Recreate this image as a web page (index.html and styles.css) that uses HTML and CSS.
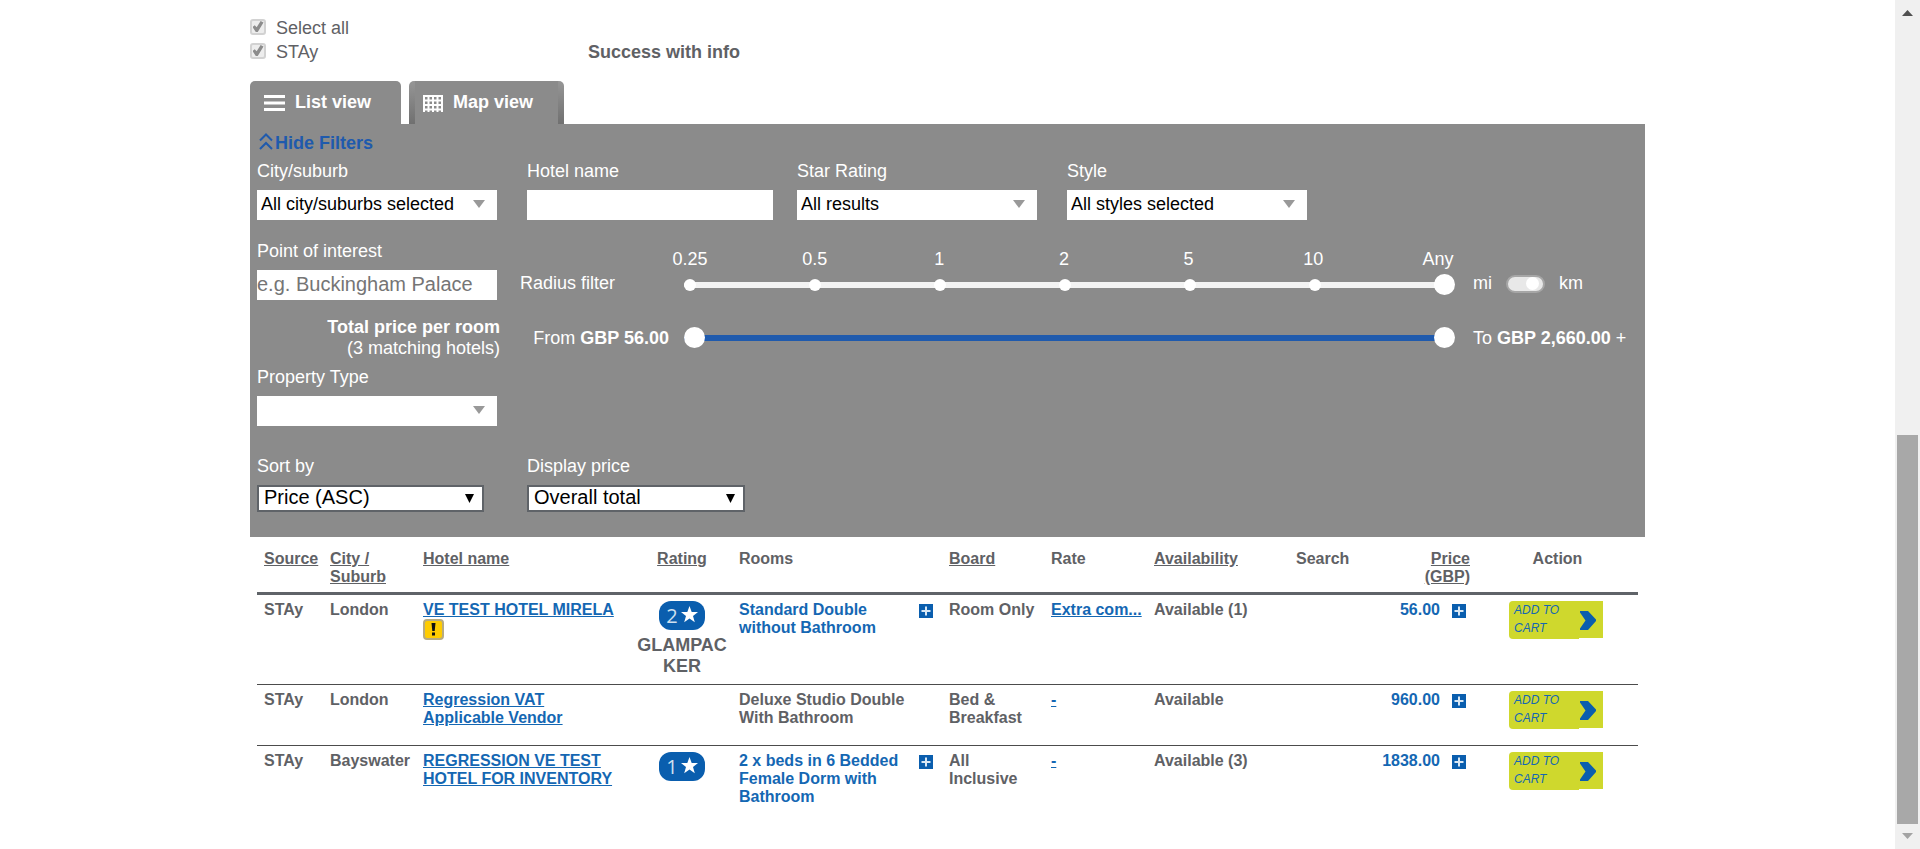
FILE: index.html
```html
<!DOCTYPE html>
<html lang="en">
<head>
<meta charset="utf-8">
<meta name="viewport" content="width=device-width, initial-scale=1">
<title>Hotel results</title>
<link rel="stylesheet" href="styles.css">
</head>
<body>
<svg class="defs" aria-hidden="true">
  <symbol id="plus" viewBox="0 0 14 14"><rect width="14" height="14" fill="#0a5eae"/><path d="M7 2.500v9M2.500 7h9" stroke="#d9e8f5" stroke-width="2"/></symbol>
  <symbol id="star" viewBox="0 0 17 17"><path fill="#fff" d="M8.500 0l2.200 5.900 6.300.2-5 3.900 1.800 6.200-5.300-3.600-5.300 3.600 1.800-6.200-5-3.900 6.300-.2z"/></symbol>
  <symbol id="next" viewBox="0 0 16 19"><path fill="#0a5eae" d="M0 0h8l8 8.500v1.500l-8 9H0v-1.500l5.500-8L0 1.500z"/></symbol>
</svg>
<div class="page">
  <main class="results">
    <section class="sources">
      <label class="source"><input class="check" type="checkbox" checked disabled>Select all</label>
      <div class="source-row">
        <label class="source"><input class="check" type="checkbox" checked disabled>STAy</label>
        <strong>Success with info</strong>
      </div>
    </section>

    <nav class="tabs">
      <button class="tab" type="button">
        <svg width="21" height="16" viewBox="0 0 21 16"><path d="M0 1.500h21M0 8h21M0 14.500h21" stroke="#fff" stroke-width="3"/></svg>
        List view
      </button>
      <button class="tab tab-map" type="button">
        <svg width="20" height="17" viewBox="0 0 20 17"><path d="M0 1h20M0 5.500h20M0 10h20M0 14.500h20M1 0v17M5.500 0v17M10 0v17M14.500 0v17M19 0v17" stroke="#fff" stroke-width="2" fill="none"/></svg>
        Map view
      </button>
    </nav>

    <section class="filters">
      <a class="hide" href="#filters">
        <svg width="15" height="17" viewBox="0 0 15 17"><path d="M1 7.500l6-6 6 6M1 16l6-6 6 6" fill="none" stroke="#1f5aad" stroke-width="2"/></svg>Hide Filters
      </a>

      <div class="fields fields-top" id="filters">
        <div class="field"><label for="city">City/suburb</label>
          <span class="pick"><select id="city"><option>All city/suburbs selected</option></select></span></div>
        <div class="field"><label for="hotel">Hotel name</label>
          <input class="text wide" id="hotel" type="text"></div>
        <div class="field"><label for="stars">Star Rating</label>
          <span class="pick"><select id="stars"><option>All results</option></select></span></div>
        <div class="field"><label for="style">Style</label>
          <span class="pick"><select id="style"><option>All styles selected</option></select></span></div>
      </div>

      <div class="range-row">
        <div class="field"><label for="poi">Point of interest</label>
          <input class="text" id="poi" type="text" placeholder="e.g. Buckingham Palace"></div>
        <label class="radius-label" for="radius">Radius filter</label>
        <div class="slider radius">
          <div class="scale"><span>0.25</span><span>0.5</span><span>1</span><span>2</span><span>5</span><span>10</span><span>Any</span></div>
          <div class="rail">
            <input class="range" id="radius" type="range" min="0" max="6" value="6">
            <div class="dots"><i></i><i></i><i></i><i></i><i></i><i></i><i></i></div>
          </div>
        </div>
        <label class="units">mi <input class="toggle" type="checkbox" checked> km</label>
      </div>

      <div class="range-row price-row">
        <div class="total"><strong>Total price per room</strong><br>(3 matching hotels)</div>
        <div class="from">From <strong>GBP 56.00</strong></div>
        <div class="slider">
          <div class="rail">
            <input class="range blue" type="range" min="56" max="2660" value="56" aria-label="Lowest price">
            <input class="range upper" type="range" min="56" max="2660" value="2660" aria-label="Highest price">
          </div>
        </div>
        <div>To <strong>GBP 2,660.00</strong> +</div>
      </div>

      <div class="field property"><label for="property">Property Type</label>
        <span class="pick"><select id="property"><option></option></select></span></div>

      <div class="fields fields-sort">
        <div class="field"><label for="sort">Sort by</label>
          <span class="pick boxed"><select id="sort"><option>Price (ASC)</option></select></span></div>
        <div class="field"><label for="display">Display price</label>
          <span class="pick boxed narrow"><select id="display"><option>Overall total</option></select></span></div>
      </div>
    </section>

    <div class="list">
      <table class="hotels">
        <colgroup>
          <col class="c-source"><col class="c-city"><col class="c-hotel"><col class="c-rating"><col class="c-rooms"><col class="c-board"><col class="c-rate"><col class="c-avail"><col class="c-search"><col class="c-price"><col class="c-action">
        </colgroup>
        <thead>
          <tr>
            <th><a href="#s">Source</a></th>
            <th><a href="#c">City / Suburb</a></th>
            <th><a href="#h">Hotel name</a></th>
            <th class="center"><a href="#r">Rating</a></th>
            <th>Rooms</th>
            <th><a href="#b">Board</a></th>
            <th>Rate</th>
            <th><a href="#a">Availability</a></th>
            <th>Search</th>
            <th class="right"><a href="#p">Price (GBP)</a></th>
            <th class="center">Action</th>
          </tr>
        </thead>
        <tbody>
          <tr>
            <td>STAy</td>
            <td>London</td>
            <td><a href="#h1">VE TEST HOTEL MIRELA</a>
              <svg class="warn" width="21" height="21" viewBox="0 0 21 21"><rect x="1" y="1" width="19" height="19" rx="3" fill="#fc0" stroke="#b7ab80" stroke-width="2"/><path d="M8.500 4h4l-.8 8H9.300zM9 13.500h3v3H9z" fill="#111"/></svg></td>
            <td class="center rating"><span class="badge">2<svg width="17" height="17"><use href="#star"/></svg></span><span class="kind">GLAMPACKER</span></td>
            <td><div class="room blue-text"><span>Standard Double without Bathroom</span><svg width="14" height="14"><use href="#plus"/></svg></div></td>
            <td>Room Only</td>
            <td class="rate"><a href="#r1">Extra com...</a></td>
            <td>Available (1)</td>
            <td></td>
            <td><div class="price blue-text">56.00<svg width="14" height="14"><use href="#plus"/></svg></div></td>
            <td><button class="cart" type="button"><span>ADD TO CART</span><svg width="16" height="19"><use href="#next"/></svg></button></td>
          </tr>
          <tr>
            <td>STAy</td>
            <td>London</td>
            <td><a href="#h2">Regression VAT Applicable Vendor</a></td>
            <td></td>
            <td><div class="room"><span>Deluxe Studio Double With Bathroom</span></div></td>
            <td>Bed &amp; Breakfast</td>
            <td class="rate"><a href="#r2">-</a></td>
            <td>Available</td>
            <td></td>
            <td><div class="price blue-text">960.00<svg width="14" height="14"><use href="#plus"/></svg></div></td>
            <td><button class="cart" type="button"><span>ADD TO CART</span><svg width="16" height="19"><use href="#next"/></svg></button></td>
          </tr>
          <tr>
            <td>STAy</td>
            <td>Bayswater</td>
            <td><a href="#h3">REGRESSION VE TEST HOTEL FOR INVENTORY</a></td>
            <td class="center rating"><span class="badge">1<svg width="17" height="17"><use href="#star"/></svg></span></td>
            <td><div class="room blue-text"><span>2 x beds in 6 Bedded Female Dorm with Bathroom</span><svg width="14" height="14"><use href="#plus"/></svg></div></td>
            <td>All Inclusive</td>
            <td class="rate"><a href="#r3">-</a></td>
            <td>Available (3)</td>
            <td></td>
            <td><div class="price blue-text">1838.00<svg width="14" height="14"><use href="#plus"/></svg></div></td>
            <td><button class="cart" type="button"><span>ADD TO CART</span><svg width="16" height="19"><use href="#next"/></svg></button></td>
          </tr>
        </tbody>
      </table>
    </div>
  </main>
  <aside class="scroll" aria-hidden="true">
    <svg width="11" height="6" viewBox="0 0 11 6"><path d="M5.500 0L11 6H0z" fill="#505050"/></svg>
    <div class="thumb"></div>
    <svg width="11" height="6" viewBox="0 0 11 6"><path d="M0 0h11L5.500 6z" fill="#a3a3a3"/></svg>
  </aside>
</div>
</body>
</html>
```

FILE: styles.css
```css
* { box-sizing: border-box; }

body {
  margin: 0;
  background: #fff;
  color: #5f6165;
  font: 18px/21px "Liberation Sans", Arial, sans-serif;
}

button, input, select { font: inherit; margin: 0; }

.defs { position: absolute; width: 0; height: 0; }

.page { display: flex; min-height: 100vh; }

.results {
  flex: 0 1 1395px;
  margin: 0 auto;
  padding-top: 16px;
}

/* Source check boxes */
.sources { line-height: 24px; }
.source { display: flex; align-items: center; gap: 10px; }
.source-row { display: grid; grid-template-columns: 338px 1fr; }

.check {
  appearance: none;
  display: grid;
  place-items: center;
  width: 16px;
  height: 16px;
  margin-bottom: 3px;
  border: 2px solid #d2d2d2;
  border-radius: 3px;
  background: #ededed;
}
.check:checked::after {
  content: "";
  width: 11px;
  height: 11px;
  background: #8c8c8c;
  clip-path: polygon(0 55%, 20% 38%, 38% 56%, 74% 0, 100% 14%, 48% 100%, 30% 100%);
}

/* Tabs */
.tabs { display: flex; gap: 8px; margin-top: 17px; }
.tab {
  display: flex;
  align-items: flex-start;
  gap: 10px;
  width: 151px;
  height: 43px;
  padding: 11px 14px;
  border: 0;
  border-radius: 5px 5px 0 0;
  background: #8b8b8b;
  color: #fff;
  font-weight: bold;
  line-height: 21px;
  white-space: nowrap;
}
.tab svg { margin-top: 3px; }
.tab-map {
  width: 155px;
  background:
    linear-gradient(#969696, #707070) left / 6px 100% no-repeat,
    linear-gradient(#969696, #707070) right / 6px 100% no-repeat,
    #8b8b8b;
}

/* Filters */
.filters {
  padding: 9px 7px 25px;
  background: #8b8b8b;
  color: #fff;
}
.hide {
  display: flex;
  gap: 1px;
  margin-left: 2px;
  color: #1f5aad;
  font-weight: bold;
  text-decoration: none;
}
.fields { display: grid; grid-template-columns: repeat(4, 270px); }
.fields-top { margin-top: 7px; }
.fields-sort { margin-top: 30px; }
.field { display: flex; flex-direction: column; gap: 8px; }
.property { margin-top: 8px; }

.text {
  width: 240px;
  height: 30px;
  padding: 0 0 2px;
  border: 0;
  background: #fff;
  font-size: 20px;
}
.text::placeholder { color: #757575; opacity: 1; }
.wide { width: 246px; }

.pick { position: relative; width: 240px; }
.pick select {
  appearance: none;
  display: block;
  width: 100%;
  height: 30px;
  padding: 0 24px 2px 4px;
  border: 0;
  border-radius: 0;
  background: #fff;
  color: #000;
}
.pick::after {
  content: "";
  position: absolute;
  top: 10px;
  right: 12px;
  width: 12px;
  height: 8px;
  background: #999;
  clip-path: polygon(0 0, 100% 0, 50% 100%);
  pointer-events: none;
}
.boxed { width: 227px; }
.narrow { width: 218px; }
.boxed select {
  height: 27px;
  padding-left: 5px;
  border: 2px solid #5f6368;
  font-size: 20px;
  line-height: 21px;
}
.boxed::after { top: 9px; right: 10px; width: 9px; height: 9px; background: #000; }

.range-row {
  display: grid;
  grid-template-columns: 243px 169px 1fr 165px;
  align-items: end;
  margin-top: 21px;
}
.radius-label { padding: 0 0 6px 20px; }
.slider { padding: 0 18px 0 15px; }
.radius { padding-bottom: 5px; }
.scale {
  display: flex;
  justify-content: space-between;
  margin-bottom: 4px;
  padding-right: 11px;
}
.scale span { display: flex; justify-content: center; width: 12px; }
.rail { position: relative; height: 21px; }

.range {
  appearance: none;
  display: block;
  width: 100%;
  height: 21px;
  background: none;
}
.range::-webkit-slider-runnable-track {
  height: 6px;
  border-radius: 3px;
  background: linear-gradient(#f3f3f3, #f3f3f3) left / calc(100% - 20px) 100% no-repeat;
}
.range::-webkit-slider-thumb {
  appearance: none;
  width: 21px;
  height: 21px;
  margin-top: -8px;
  border-radius: 50%;
  background: #fff;
}
.blue::-webkit-slider-runnable-track {
  background: linear-gradient(#1f5aad, #1f5aad) left / calc(100% - 20px) 100% no-repeat;
}
.upper { position: absolute; inset: 0; pointer-events: none; }
.upper::-webkit-slider-runnable-track { background: none; }
.upper::-webkit-slider-thumb { pointer-events: auto; }

.dots {
  position: absolute;
  inset: 5px 9px 4px 0;
  display: flex;
  justify-content: space-between;
  pointer-events: none;
}
.dots i { width: 12px; height: 12px; border-radius: 50%; background: #fff; }

.units { display: flex; align-items: center; gap: 14px; padding-bottom: 6px; }
.toggle {
  appearance: none;
  display: flex;
  align-items: center;
  justify-content: flex-end;
  width: 39px;
  height: 18px;
  padding-right: 4px;
  border: 2px solid #a6a6a6;
  border-radius: 9px;
  background: #e8e8e8;
}
.toggle::after {
  content: "";
  width: 13px;
  height: 13px;
  border-radius: 50%;
  background: #fff;
}

.price-row { align-items: center; margin-top: 17px; }
.total, .from { text-align: right; }

/* Hotels table */
.list { padding: 7px 7px 0; }
.hotels {
  width: 100%;
  table-layout: fixed;
  border-spacing: 0;
  font-size: 16px;
  font-weight: bold;
  line-height: 18px;
}
.c-source { width: 66px; }
.c-city { width: 93px; }
.c-hotel { width: 216px; }
.c-rating { width: 100px; }
.c-rooms { width: 210px; }
.c-board { width: 102px; }
.c-rate { width: 103px; }
.c-avail { width: 142px; }
.c-search { width: 94px; }
.c-price { width: 94px; }
.c-action { width: 161px; }

.hotels th {
  padding: 6px 7px;
  border-bottom: 3px solid #5f6368;
  text-align: left;
  vertical-align: top;
}
.hotels td {
  padding: 6px 7px 7px;
  border-bottom: 1px solid #4c4c4c;
  vertical-align: top;
}
.hotels tr:last-child td { border-bottom: 0; }
.hotels th:last-child, .hotels th:first-child { white-space: nowrap; }
.hotels thead tr th { border-bottom: 3px solid #5f6368; }
.hotels th a { color: inherit; }
.hotels td a, .blue-text { color: #1467b3; }
.hotels .center { text-align: center; }
.hotels .right { text-align: right; }
.hotels .rating { padding-left: 3px; padding-right: 3px; }
.rate { white-space: nowrap; }
.warn { display: block; }

.badge {
  display: flex;
  align-items: center;
  justify-content: center;
  gap: 3px;
  width: 46px;
  height: 29px;
  margin: 0 auto 5px;
  border-radius: 12px;
  background: #0a5eae;
  color: #cfe0f0;
  font: 20px/29px "Open Sans", sans-serif;
}
.badge svg { margin-bottom: 3px; }
.kind {
  display: block;
  font-size: 18px;
  line-height: 21px;
  word-break: break-all;
}
.room { display: flex; justify-content: space-between; padding-right: 2px; }
.room span { flex: 0 1 180px; }
.room svg, .price svg { flex: none; margin-top: 3px; }
.price { display: flex; justify-content: flex-end; gap: 12px; padding-right: 4px; }

.cart {
  display: flex;
  justify-content: space-between;
  width: 94px;
  height: 38px;
  margin: 0 0 9px 25px;
  padding: 0 7px 0 5px;
  border: 0;
  border-radius: 4px 0 0 4px;
  background:
    linear-gradient(#cfd82d, #cfd82d) left / 70px 38px no-repeat,
    linear-gradient(#cfd82d, #cfd82d) top right / 24px 37px no-repeat;
  color: #1467b3;
  font-size: 12px;
  font-style: italic;
  font-weight: normal;
  line-height: 18px;
  text-align: left;
}
.cart span { width: 52px; }
.cart svg { margin-top: 10px; }

/* Scroll bar */
.scroll {
  position: sticky;
  top: 0;
  flex: 0 0 25px;
  display: flex;
  flex-direction: column;
  align-items: center;
  height: 100vh;
  padding: 10px 2px;
  background: #f0f0f0;
}
.thumb {
  width: 100%;
  height: 389px;
  margin: auto 0 9px;
  background: #a8a8a8;
}
```
